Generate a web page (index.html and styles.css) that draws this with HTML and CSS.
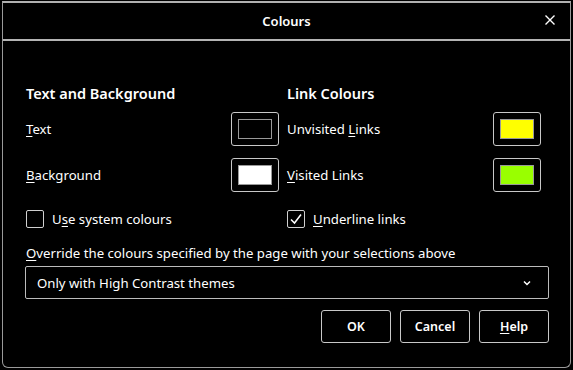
FILE: index.html
```html
<!DOCTYPE html>
<html lang="en">
<head>
  <meta charset="UTF-8" />
  <title>Colours</title>
  <link rel="stylesheet" href="styles.css">
</head>
<body>

<div class="dialog">
  <div class="titlebar">
    <span class="title">Colours</span>
    <button class="close" aria-label="Close">
      <svg width="10" height="10" viewBox="0 0 10 10"><path d="M0.5 0.5 L9.5 9.5 M9.5 0.5 L0.5 9.5" stroke="#fff" stroke-width="1.4"/></svg>
    </button>
  </div>

  <div class="content">
    <div class="columns">
      <div class="col">
        <h2>Text and Background</h2>
        <div class="row">
          <label><u>T</u>ext</label>
          <button class="swatch"><span class="fill" style="background:#000"></span></button>
        </div>
        <div class="row">
          <label><u>B</u>ackground</label>
          <button class="swatch"><span class="fill" style="background:#fff"></span></button>
        </div>
        <div class="check">
          <span class="box"></span>
          <span>U<u>s</u>e system colours</span>
        </div>
      </div>
      <div class="col">
        <h2>Link Colours</h2>
        <div class="row">
          <label>Unvisited <u>L</u>inks</label>
          <button class="swatch"><span class="fill" style="background:#ffff00"></span></button>
        </div>
        <div class="row">
          <label><u>V</u>isited Links</label>
          <button class="swatch"><span class="fill" style="background:#99ff00"></span></button>
        </div>
        <div class="check">
          <span class="box checked">
            <svg width="14" height="14" viewBox="0 0 14 14"><path d="M2 7.5 L5.5 11 L12 2.5" fill="none" stroke="#fff" stroke-width="1.5"/></svg>
          </span>
          <span><u>U</u>nderline links</span>
        </div>
      </div>
    </div>

    <div class="override"><u>O</u>verride the colours specified by the page with your selections above</div>
    <div class="select">
      <span>Only with High Contrast themes</span>
      <svg width="8" height="6" viewBox="0 0 8 6"><path d="M1 1.5 L4 4.5 L7 1.5" fill="none" stroke="#fff" stroke-width="1.5"/></svg>
    </div>

    <div class="buttons">
      <button class="btn">OK</button>
      <button class="btn">Cancel</button>
      <button class="btn"><u>H</u>elp</button>
    </div>
  </div>
</div>

</body>
</html>
```

FILE: styles.css
```css
body {
  margin: 0;
  background: #000;
  color: #fff;
  font-family: "Noto Sans", Arial, sans-serif;
  font-size: 13.2px;
}

.dialog {
  box-sizing: border-box;
  width: 569px;
  height: 367px;
  margin: 1px 0 0 2px;
  border: 1px solid #9a9a9a;
  border-top: 2px solid #b0b0b0;
  border-radius: 0 0 6px 6px;
  background: #000;
}

.titlebar {
  height: 36px;
  border-bottom: 2px solid #b4b4b4;
  display: flex;
  align-items: center;
  justify-content: center;
  position: relative;
}

.title {
  font-size: 13px;
  font-weight: 600;
}

.close {
  position: absolute;
  right: 15px;
  top: 12px;
  background: none;
  border: none;
  padding: 0;
  line-height: 0;
}

.content {
  padding: 42px 21px 0 20px;
}

.columns {
  display: grid;
  grid-template-columns: 253px 254px;
  column-gap: 8px;
  padding-left: 3px;
}

h2 {
  margin: 0 0 9px;
  font-size: 14.5px;
  font-weight: 600;
  line-height: 20px;
}

.row {
  display: flex;
  justify-content: space-between;
  align-items: center;
  height: 34px;
  margin-bottom: 12px;
}

label {
  font-size: 13.2px;
}

u {
  text-decoration-thickness: 1px;
  text-underline-offset: 2px;
}

.swatch {
  box-sizing: border-box;
  width: 48px;
  height: 34px;
  padding: 6px;
  background: #000;
  border: 1px solid #c8c8c8;
  border-radius: 3px;
  display: flex;
}

.fill {
  flex: 1;
  border: 1px solid #999;
}

.check {
  display: flex;
  align-items: center;
  gap: 8px;
  height: 20px;
  margin-top: 17px;
}

.box {
  box-sizing: border-box;
  width: 18px;
  height: 18px;
  border: 1px solid #d0d0d0;
  border-radius: 2px;
  display: flex;
  align-items: center;
  justify-content: center;
}

.override {
  margin: 14px 0 0 3px;
  height: 20px;
  line-height: 20px;
}

.select {
  box-sizing: border-box;
  height: 33px;
  margin: 3px 0 0 2px;
  border: 1px solid #bcbcbc;
  border-radius: 2px;
  display: flex;
  align-items: center;
  justify-content: space-between;
  padding: 0 17px 0 11px;
}

.buttons {
  display: flex;
  justify-content: flex-end;
  gap: 9px;
  margin-top: 11px;
}

.btn {
  box-sizing: border-box;
  width: 70px;
  height: 33px;
  background: #000;
  color: #fff;
  border: 1px solid #c8c8c8;
  border-radius: 3px;
  font-family: inherit;
  font-size: 12.5px;
  font-weight: 600;
}
```
